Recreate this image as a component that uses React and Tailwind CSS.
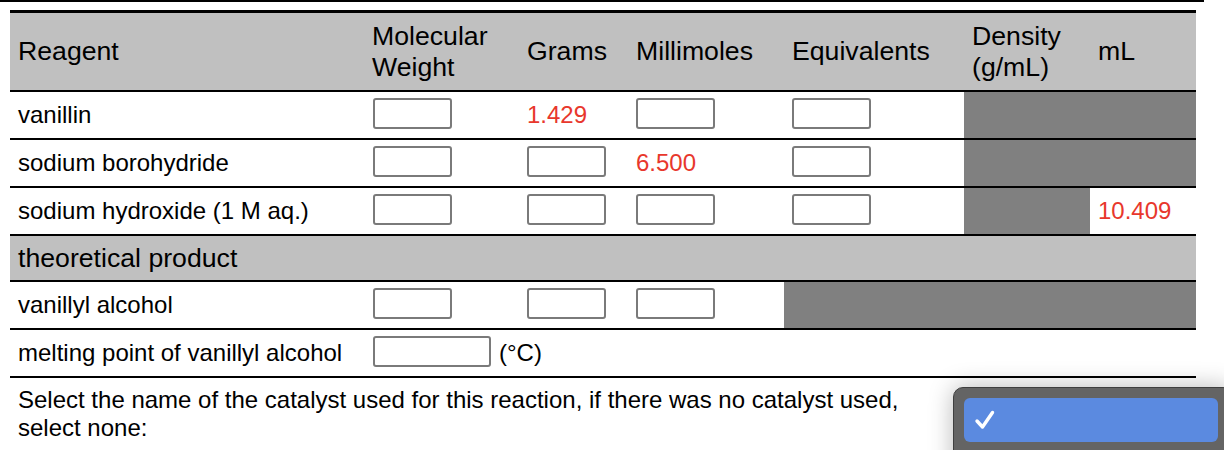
import React from 'react';

const cols = 'grid grid-cols-[355px_154px_109px_156px_180px_126px_106px]';

function Box({ wide }) {
  return (
    <input
      type="text"
      className={
        'h-[31px] mb-[3px] border-2 border-[#7a7a7a] rounded-[3px] bg-white outline-none ' +
        (wide ? 'w-[118px]' : 'w-[79px]')
      }
    />
  );
}

function Cell({ children, gray, className = '' }) {
  return (
    <div className={'flex items-center px-2 ' + (gray ? 'bg-[#808080] ' : '') + className}>
      {children}
    </div>
  );
}

function Red({ children }) {
  return <span className="text-[#e8372c]">{children}</span>;
}

const rows = [
  { name: 'vanillin', mw: <Box />, g: <Red>1.429</Red>, mm: <Box />, eq: <Box />, density: 'gray', ml: 'gray' },
  { name: 'sodium borohydride', mw: <Box />, g: <Box />, mm: <Red>6.500</Red>, eq: <Box />, density: 'gray', ml: 'gray' },
  { name: 'sodium hydroxide (1 M aq.)', mw: <Box />, g: <Box />, mm: <Box />, eq: <Box />, density: 'gray', ml: <Red>10.409</Red> },
];

export default function App() {
  return (
    <div className="relative w-[1224px] h-[450px] overflow-hidden bg-white text-black font-['Liberation_Sans',Arial,sans-serif]">
      <div className="h-[2px] w-[1204px] bg-black" />

      <div className="ml-[10px] mt-2 w-[1186px] text-[24px] leading-[1.15]">
        {/* header */}
        <div className={cols + ' h-[82px] border-t-[3px] border-b-2 border-black bg-[#c0c0c0] text-[26.67px]'}>
          <Cell>Reagent</Cell>
          <Cell className="pl-[7px]">Molecular<br />Weight</Cell>
          <Cell>Grams</Cell>
          <Cell>Millimoles</Cell>
          <Cell>Equivalents</Cell>
          <Cell>Density<br />(g/mL)</Cell>
          <Cell>mL</Cell>
        </div>

        {rows.map((r) => (
          <div key={r.name} className={cols + ' h-[48px] border-b-2 border-black'}>
            <Cell>{r.name}</Cell>
            <Cell>{r.mw}</Cell>
            <Cell>{r.g}</Cell>
            <Cell>{r.mm}</Cell>
            <Cell>{r.eq}</Cell>
            <Cell gray={r.density === 'gray'} />
            <Cell gray={r.ml === 'gray'}>{r.ml !== 'gray' && r.ml}</Cell>
          </div>
        ))}

        <div className="flex items-center h-[46px] px-2 border-b-2 border-black bg-[#c0c0c0] text-[26.67px]">
          theoretical product
        </div>

        <div className={cols + ' h-[48px] border-b-2 border-black'}>
          <Cell>vanillyl alcohol</Cell>
          <Cell><Box /></Cell>
          <Cell><Box /></Cell>
          <Cell><Box /></Cell>
          <div className="col-span-3 bg-[#808080]" />
        </div>

        <div className={cols + ' h-[48px] border-b-2 border-black'}>
          <Cell>melting point of vanillyl alcohol</Cell>
          <Cell className="col-span-2 gap-2"><Box wide />(°C)</Cell>
        </div>

        <div className="flex">
          <div className="w-[954px] px-2 pt-[8px]">
            Select the name of the catalyst used for this reaction, if there was no catalyst used, select none:
          </div>
        </div>
      </div>

      {/* native select popup */}
      <div className="absolute left-[953px] top-[387px] w-[280px] h-[100px] rounded-[10px] border border-[#3f3f3f] bg-[#646464] shadow-[0_0_24px_rgba(0,0,0,0.28)] pt-[10px] pl-[10px]">
        <div className="flex items-center w-[254px] h-[44px] rounded-[6px] bg-[#5b8ae0] pl-[10px]">
          <svg width="22" height="22" viewBox="0 0 22 22">
            <path d="M3 12 L8.5 18 L18.5 3.5" fill="none" stroke="white" strokeWidth="3.4" strokeLinecap="round" strokeLinejoin="round" />
          </svg>
        </div>
      </div>
    </div>
  );
}
